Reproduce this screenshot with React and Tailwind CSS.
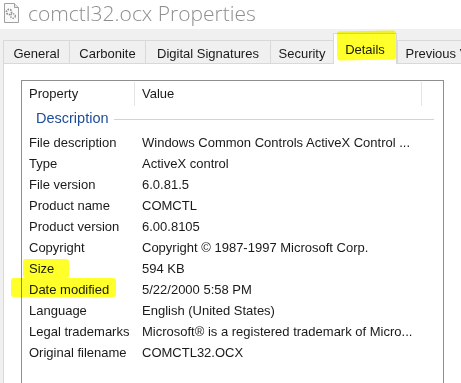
import React from 'react'

const tabs = [
  { label: 'General', w: 'w-[66px]' },
  { label: 'Carbonite', w: 'w-[76px]' },
  { label: 'Digital Signatures', w: 'w-[125px]' },
  { label: 'Security', w: 'w-[63px]' },
  { label: 'Details', w: 'w-[64px]', active: true },
  { label: 'Previous Versions', w: 'w-[120px]' },
]

const rows = [
  ['File description', 'Windows Common Controls ActiveX Control ...'],
  ['Type', 'ActiveX control'],
  ['File version', '6.0.81.5'],
  ['Product name', 'COMCTL'],
  ['Product version', '6.00.8105'],
  ['Copyright', 'Copyright \u00a9 1987-1997 Microsoft Corp.'],
  ['Size', '594 KB'],
  ['Date modified', '5/22/2000 5:58 PM'],
  ['Language', 'English (United States)'],
  ['Legal trademarks', 'Microsoft\u00ae is a registered trademark of Micro...'],
  ['Original filename', 'COMCTL32.OCX'],
]

function FileIcon() {
  return (
    <svg width="17" height="20" viewBox="0 0 17 20" className="shrink-0 mt-[3px]">
      <path d="M1.5 0.5h10l4 4v15h-14z" fill="#fafafa" stroke="#a0a0a0" />
      <path d="M11.5 0.5v4h4" fill="#e6e6e6" stroke="#a0a0a0" />
      <circle cx="6" cy="9" r="2.6" fill="none" stroke="#8c8c8c" strokeWidth="1.6" strokeDasharray="1.6 1" />
      <circle cx="10" cy="13" r="2.3" fill="none" stroke="#9a9a9a" strokeWidth="1.5" strokeDasharray="1.4 1" />
    </svg>
  )
}

export default function App() {
  return (
    <div className="relative w-[461px] h-[383px] overflow-hidden bg-[#f0f0f0] flex flex-col font-['Liberation_Sans',Arial,sans-serif] text-[13px] text-[#1a1a1a]">
      {/* title */}
      <div className="h-[29px] shrink-0 bg-white flex items-start pl-[3px] gap-[8px]">
        <FileIcon />
        <span className="font-['Open_Sans',sans-serif] font-light text-[21px] leading-[26px] text-[#8e8e8e]">
          comctl32.ocx Properties
        </span>
      </div>

      {/* tabs */}
      <div className="h-[34px] shrink-0 flex items-end pl-[3px]">
        {tabs.map((t) =>
          t.active ? (
            <div
              key={t.label}
              className={`${t.w} h-[31px] shrink-0 bg-white border-x border-t border-[#d9d9d9] -mb-px relative z-10 flex items-center justify-center pt-[2px]`}
            >
              {t.label}
            </div>
          ) : (
            <div
              key={t.label}
              className={`${t.w} h-[23px] shrink-0 bg-[#f0f0f0] border-l border-t border-[#d9d9d9] flex items-center justify-center pt-[3px] whitespace-nowrap`}
            >
              {t.label}
            </div>
          )
        )}
      </div>

      {/* panel */}
      <div className="flex-1 ml-[3px] bg-white border-l border-t border-[#d9d9d9] pl-[17px] pt-[16px]">
        <div className="w-[423px] h-[400px] border border-[#8f8f8f]">
          <div className="h-[25px] flex items-center pt-px">
            <div className="w-[113px] h-full pl-[7px] flex items-center border-r border-[#e5e5e5]">Property</div>
            <div className="w-[287px] h-full pl-[7px] flex items-center border-r border-[#e5e5e5]">Value</div>
          </div>
          <div className="h-[25px] flex items-center pl-[14px] pr-[9px] gap-[5px] pt-px">
            <span className="text-[14.5px] text-[#1d4c9a]">Description</span>
            <div className="flex-1 h-px bg-[#c9d5e5]" />
          </div>
          <div className="pt-px">
            {rows.map(([k, v]) => (
              <div key={k} className="h-[21px] flex items-center whitespace-nowrap">
                <div className="w-[120px] pl-[7px]">{k}</div>
                <div>{v}</div>
              </div>
            ))}
          </div>
        </div>
      </div>

      {/* marker highlights */}
      <div className="absolute left-[337px] top-[31px] w-[59px] h-[29px] bg-[#ffff2a] mix-blend-multiply rounded-[3px] -rotate-1 z-20" />
      <div className="absolute left-[23px] top-[259px] w-[46px] h-[19px] bg-[#ffff2a] mix-blend-multiply rounded-[3px] z-20" />
      <div className="absolute left-[11px] top-[278px] w-[105px] h-[19px] bg-[#ffff2a] mix-blend-multiply rounded-[3px] z-20" />
    </div>
  )
}
